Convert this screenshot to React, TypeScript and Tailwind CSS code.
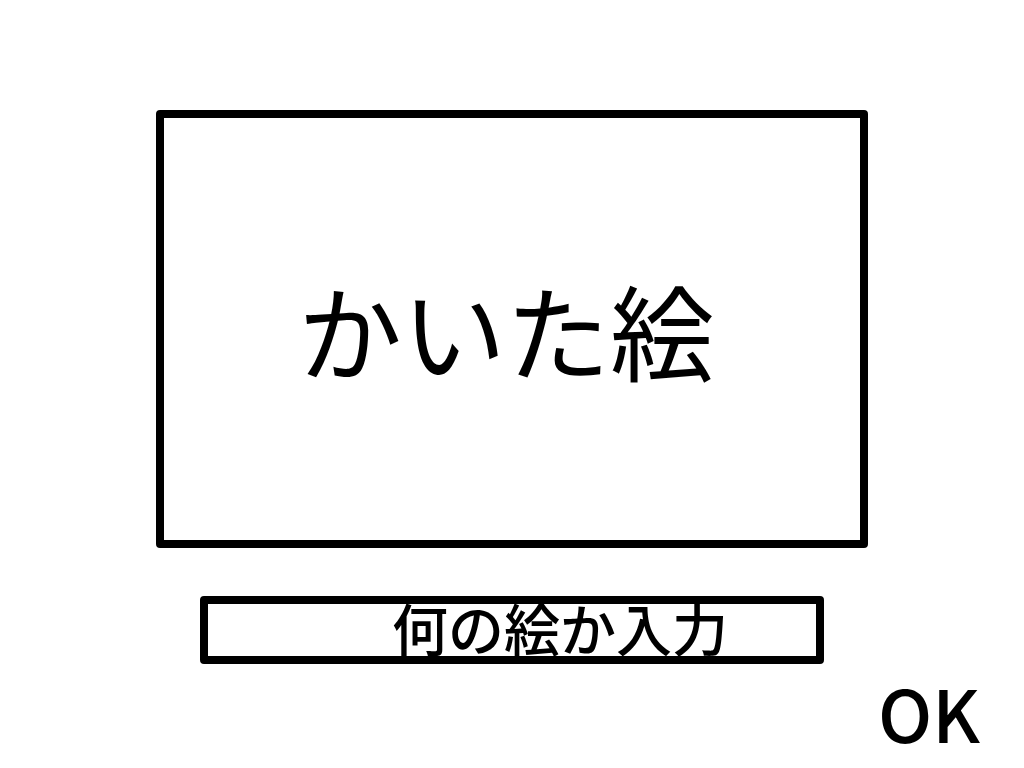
import { useState } from 'react';

const App = () => {
  const [answer, setAnswer] = useState('');

  return (
    <main className="flex min-h-screen flex-col items-center bg-white pt-[110px] font-['Noto_Sans_CJK_JP',sans-serif] text-black">
      <section
        aria-label="かいた絵"
        className="flex aspect-[711/438] w-[69.5%] items-center justify-center rounded border-8 border-black pr-3"
      >
        <p className="text-[104px] leading-none whitespace-nowrap">かいた絵</p>
      </section>

      <form
        className="flex w-full flex-col items-center"
        onSubmit={(e) => e.preventDefault()}
      >
        <input
          type="text"
          aria-label="何の絵か入力"
          placeholder="何の絵か入力"
          value={answer}
          onChange={(e) => setAnswer(e.target.value)}
          className="mt-12 h-[68px] w-[61%] rounded border-8 border-black pb-2 pl-[18%] text-[56px] leading-none font-medium outline-none placeholder:text-black placeholder:opacity-100"
        />
        <button
          type="submit"
          className="mt-3 mr-11 cursor-pointer self-end text-[72px] leading-none font-medium"
        >
          OK
        </button>
      </form>
    </main>
  );
};

export default App;
